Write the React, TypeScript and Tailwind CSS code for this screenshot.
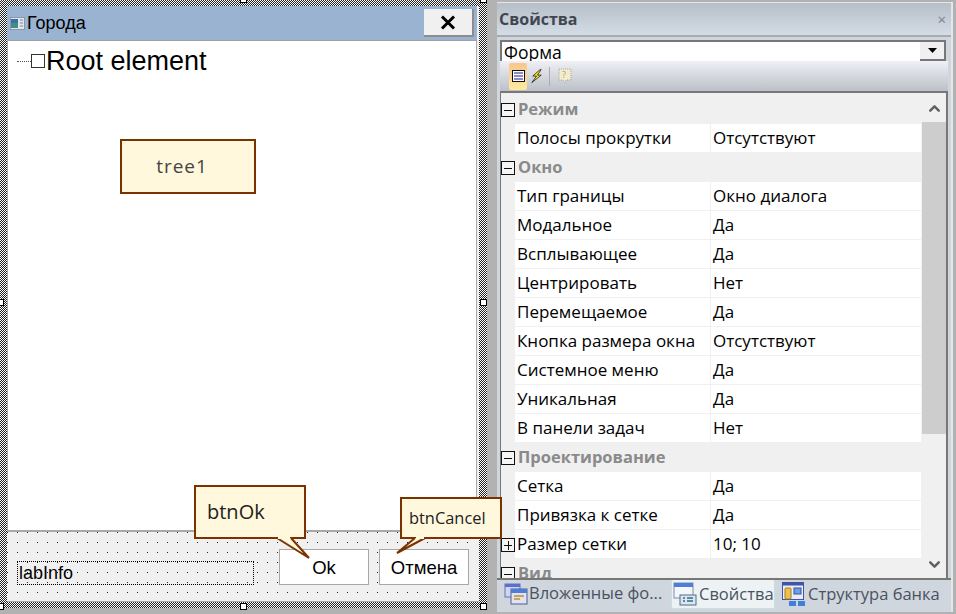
import { ChevronDown, ChevronUp } from 'lucide-react';

type Row = { name: string; value?: string; group?: boolean; plus?: boolean };

const rows: Row[] = [
    { name: 'Режим', group: true },
    { name: 'Полосы прокрутки', value: 'Отсутствуют' },
    { name: 'Окно', group: true },
    { name: 'Тип границы', value: 'Окно диалога' },
    { name: 'Модальное', value: 'Да' },
    { name: 'Всплывающее', value: 'Да' },
    { name: 'Центрировать', value: 'Нет' },
    { name: 'Перемещаемое', value: 'Да' },
    { name: 'Кнопка размера окна', value: 'Отсутствуют' },
    { name: 'Системное меню', value: 'Да' },
    { name: 'Уникальная', value: 'Да' },
    { name: 'В панели задач', value: 'Нет' },
    { name: 'Проектирование', group: true },
    { name: 'Сетка', value: 'Да' },
    { name: 'Привязка к сетке', value: 'Да' },
    { name: 'Размер сетки', value: '10; 10', plus: true },
    { name: 'Вид', group: true },
];

const Expander = ({ plus }: { plus?: boolean }) => (
    <svg width="14" height="14" viewBox="0 0 14 14" className="shrink-0">
        <rect x="0.5" y="0.5" width="13" height="13" fill="#f5f5f5" stroke="#111" />
        <path d="M3 7.5h8" stroke="#111" />
        {plus && <path d="M7.5 3v9" stroke="#111" />}
    </svg>
);

const Handle = ({ className }: { className: string }) => (
    <div className={`absolute h-[7px] w-[7px] border border-black bg-white ${className}`} />
);

const FormIcon = () => (
    <svg width="15" height="13" viewBox="0 0 15 13" className="shrink-0">
        <rect x="0.5" y="0.5" width="14" height="12" fill="#dfe6ee" stroke="#8a97a8" />
        <rect x="1" y="2" width="7" height="9" fill="#3f8f82" />
        <path d="M1 2h7v4H1z" fill="#3d6fa5" />
        <path d="M10 3h3M10 6h3M10 9h3" stroke="#7d8894" />
    </svg>
);

const WindowsIcon = () => (
    <svg width="24" height="22" viewBox="0 0 24 22" className="shrink-0">
        <rect x="1" y="1" width="15" height="13" fill="#cfd6ee" stroke="#6a6fb0" />
        <rect x="1" y="1" width="15" height="3" fill="#5a6fd0" />
        <rect x="7" y="6" width="16" height="15" fill="#dfe4ee" stroke="#4d5f9c" />
        <rect x="7" y="6" width="16" height="4" fill="#4e7fd8" />
        <path d="M10 13h10M10 16h6" stroke="#c98b2e" strokeWidth="1.5" />
    </svg>
);

const PropsIcon = () => (
    <svg width="24" height="24" viewBox="0 0 24 24" className="shrink-0">
        <rect x="1" y="1" width="19" height="15" fill="#f4f6fb" stroke="#7f8ab0" />
        <rect x="1" y="1" width="19" height="4" fill="#4e7fd8" />
        <rect x="7" y="13" width="16" height="10" fill="#dfe7ee" stroke="#4d6a8c" />
        <path d="M10 16h2M14 16h6M10 19h2M14 19h6" stroke="#2d6f8f" strokeWidth="1.5" />
    </svg>
);

const BankIcon = () => (
    <svg width="24" height="25" viewBox="0 0 24 25" className="shrink-0">
        <rect x="0.5" y="0.5" width="21" height="17" fill="#e8edf6" stroke="#3f55a5" />
        <rect x="0.5" y="0.5" width="21" height="3" fill="#3f55a5" />
        <rect x="3" y="6" width="6" height="11" rx="1" fill="#eec04e" stroke="#a67d1e" />
        <rect x="12" y="6" width="7" height="6" fill="#6f9fe0" stroke="#2f55a5" />
        <rect x="7" y="19" width="7" height="5" fill="#3f7fe0" />
        <rect x="16" y="19" width="7" height="5" fill="#3f7fe0" />
    </svg>
);

export default function App() {
    return (
        <div className="flex h-[614px] w-[956px] overflow-hidden bg-[#b2b2b2] font-['Open_Sans','Noto_Sans',sans-serif] text-[17px] text-black">
            {/* Designer */}
            <div className="relative h-[608px] w-[487px] shrink-0 bg-[repeating-conic-gradient(#222_0_25%,#fff_0_50%)] bg-[length:2px_2px] pl-[7px] pt-[6px]">
                <div className="flex h-[596px] w-[472px] flex-col border-b border-[#a8a8a8] bg-[#f0f0f0] pr-[2px]">
                    <div className="flex h-[35px] shrink-0 items-center justify-between border-b border-[#a0a0a0] bg-[#9ab3d1] pl-[3px] pr-[3px]">
                        <div className="flex items-center gap-[2px]">
                            <FormIcon />
                            <span className="mt-[1px] font-['Liberation_Sans',sans-serif] text-[18px]">Города</span>
                        </div>
                        <button className="flex h-[28px] w-[50px] items-center justify-center border-b-2 border-r-2 border-[#8d8d8d] bg-[#f0f0f0]">
                            <svg width="16" height="15" viewBox="0 0 16 15">
                                <path d="M2 1.5l12 12M14 1.5l-12 12" stroke="#000" strokeWidth="3" />
                            </svg>
                        </button>
                    </div>

                    <div className="relative h-[491px] shrink-0 border-b-2 border-l border-r border-[#a8a8a8] bg-white pl-[9px] pt-[7px]">
                        <div className="flex items-center">
                            <span className="w-[14px] border-t border-dotted border-[#555]" />
                            <span className="h-[14px] w-[14px] border border-[#333]" />
                            <span className="ml-[1px] font-['Liberation_Sans',sans-serif] text-[27px] font-light leading-[26px]">Root element</span>
                        </div>
                    </div>

                    <div className="flex flex-1 items-end justify-between bg-[#f0f0f0] bg-[radial-gradient(circle_at_0.5px_0.5px,#222_0.7px,transparent_0.8px)] bg-[length:10px_10px] pb-[16px] pl-[10px] pr-[8px]">
                        <div className="flex h-[24px] w-[237px] items-center border border-dotted border-black pl-[1px] font-['Liberation_Sans',sans-serif] text-[18px]">
                            labInfo
                        </div>
                        <div className="flex gap-[10px] font-['Liberation_Sans',sans-serif] text-[18.5px]">
                            <div className="flex h-[36px] w-[90px] items-center justify-center border border-[#a8a8a8] bg-white pt-[2px]">Ok</div>
                            <div className="flex h-[36px] w-[90px] items-center justify-center border border-[#a8a8a8] bg-white pt-[2px]">Отмена</div>
                        </div>
                    </div>
                </div>

                <Handle className="left-[-3px] top-[299px]" />
                <Handle className="left-[480px] top-[299px]" />
                <Handle className="bottom-[-2px] left-[-3px]" />
                <Handle className="bottom-[-2px] left-[240px]" />
                <Handle className="bottom-[-2px] left-[480px]" />
                <Handle className="left-[240px] top-[-4px]" />
                <Handle className="left-[480px] top-[-4px]" />

                {/* Callouts */}
                <div className="absolute left-[120px] top-[139px] flex h-[55px] w-[136px] items-center justify-center border-2 border-[#7a3300] bg-[#fff8dc] pr-[12px] text-[19px] tracking-[1px] text-[#444]">
                    tree1
                </div>
                <div className="absolute left-[194px] top-[485px] flex h-[54px] w-[112px] items-center border-2 border-[#7a3300] bg-[#fff8dc] pl-[11px] text-[20px] text-[#222]">
                    btnOk
                </div>
                <div className="absolute left-[400px] top-[497px] flex h-[42px] w-[102px] items-center border-2 border-[#7a3300] bg-[#fff8dc] pl-[7px] text-[16.4px] text-[#222]">
                    btnCancel
                </div>
                <svg className="absolute left-[270px] top-[530px]" width="50" height="32" viewBox="0 0 50 32">
                    <path d="M7 8 L39 28 L21 8" fill="#fff8dc" stroke="#7a3300" strokeWidth="2" />
                    <path d="M8 8 L20 8" stroke="#fff8dc" strokeWidth="2" />
                </svg>
                <svg className="absolute left-[390px] top-[530px]" width="50" height="30" viewBox="0 0 50 30">
                    <path d="M25 8 L7 23 L35 8" fill="#fff8dc" stroke="#7a3300" strokeWidth="2" />
                    <path d="M26 8 L34 8" stroke="#fff8dc" strokeWidth="2" />
                </svg>
            </div>

            {/* Properties panel */}
            <div className="ml-[10px] mt-[2px] flex h-[610px] w-[456px] shrink-0 flex-col border-r-2 border-t border-[#e4e6ea] bg-[#d0d6de]">
                <div className="flex h-[34px] shrink-0 items-center justify-between border-b-2 border-[#a8acb2] bg-gradient-to-b from-[#b6bec8] to-[#d4dce6] pl-[2px] pr-[5px]">
                    <span className="text-[16px] font-bold text-[#3f4650]">Свойства</span>
                    <span className="text-[15px] text-[#7c8288]">×</span>
                </div>

                <div className="ml-[3px] mr-[5px] mt-[3px] flex h-[21px] shrink-0 items-start overflow-hidden border-l-2 border-t-2 border-[#777] bg-white pl-[2px]">
                    <span className="mt-[-1px] flex-1 text-[17.5px] leading-[22px]">Форма</span>
                    <div className="flex h-[19px] w-[26px] items-center justify-center border-b-2 border-r-2 border-[#777] bg-[#f0f0f0]">
                        <svg width="9" height="5" viewBox="0 0 9 5"><path d="M0 0h9L4.500 5z" fill="#000" /></svg>
                    </div>
                </div>

                <div className="ml-[3px] mr-[3px] flex h-[32px] shrink-0 items-center gap-[3px] border-b-2 border-[#777] bg-gradient-to-b from-[#f0f0f6] to-[#bcc0c8] pl-[9px]">
                    <div className="flex h-[27px] w-[18px] items-center justify-center rounded-[2px] bg-gradient-to-b from-[#f7c68e] to-[#ffe9a0]">
                        <svg width="13" height="12" viewBox="0 0 13 12">
                            <rect x="0.5" y="0.5" width="12" height="11" fill="#fff" stroke="#111" />
                            <path d="M2 3h9M2 6h9M2 9h9" stroke="#1a1a8c" />
                        </svg>
                    </div>
                    <svg width="14" height="17" viewBox="0 0 15 17">
                        <path d="M11 1L3 8h4L2 15l10-8H8l4-6z" fill="#ffe81a" stroke="#111" strokeWidth="0.8" />
                    </svg>
                    <span className="mx-[2px] h-[19px] w-px bg-[#a8acb2]" />
                    <svg width="15" height="16" className="ml-[3px]" viewBox="0 0 15 16">
                        <path d="M1 1h12v11H8l-1 3-2-3H1z" fill="#f2ecc8" stroke="#a8a8a0" strokeDasharray="1 1" />
                        <text x="4" y="10" fontSize="9" fill="#9a9a9a">?</text>
                    </svg>
                </div>

                <div className="ml-[3px] mr-[3px] flex h-[485px] shrink-0 border-l border-r-2 border-[#777] bg-[#f0f0f0] pt-[2px]">
                    <div className="flex-1 overflow-hidden">
                        {rows.map((row) => (
                            <div key={row.name} className="flex h-[29px] items-start">
                                <div className="flex h-full w-[14px] shrink-0 items-center">
                                    {(row.group || row.plus) && <Expander plus={row.plus} />}
                                </div>
                                {row.group ? (
                                    <span className="ml-[3px] self-center text-[16.5px] font-bold text-[#8a8a8a]">{row.name}</span>
                                ) : (
                                    <div className="flex h-[28px] flex-1 bg-white">
                                        <div className="flex h-full w-[196px] shrink-0 items-center border-r border-[#f0f0f0] pb-[1px] pl-[2px]">{row.name}</div>
                                        <div className="flex h-full flex-1 items-center pb-[1px] pl-[2px]">{row.value}</div>
                                    </div>
                                )}
                            </div>
                        ))}
                    </div>
                    <div className="ml-[1px] flex w-[24px] shrink-0 flex-col bg-[#f0f0f0]">
                        <div className="flex h-[27px] items-center justify-center">
                            <ChevronUp size={17} strokeWidth={3.5} color="#606060" />
                        </div>
                        <div className="h-[312px] bg-[#cdcdcd]" />
                        <div className="flex-1" />
                        <div className="flex h-[27px] items-center justify-center">
                            <ChevronDown size={17} strokeWidth={3.5} color="#606060" />
                        </div>
                    </div>
                </div>

                <div className="flex flex-1 items-start border-t-2 border-[#777] bg-[#d0d6de] pl-[7px] text-[16.5px] text-[#49525e]">
                    <div className="flex h-[27px] w-[167px] items-center gap-[1px]">
                        <WindowsIcon />
                        <span>Вложенные фо...</span>
                    </div>
                    <div className="flex h-[29px] w-[104px] items-center gap-[2px] rounded-[2px] border-b border-l border-r border-[#c8e0e0] bg-[#edf3f4] pl-[1px]">
                        <PropsIcon />
                        <span>Свойства</span>
                    </div>
                    <div className="ml-[7px] flex h-[28px] items-center gap-[2px]">
                        <BankIcon />
                        <span>Структура банка</span>
                    </div>
                </div>
            </div>
        </div>
    );
}
